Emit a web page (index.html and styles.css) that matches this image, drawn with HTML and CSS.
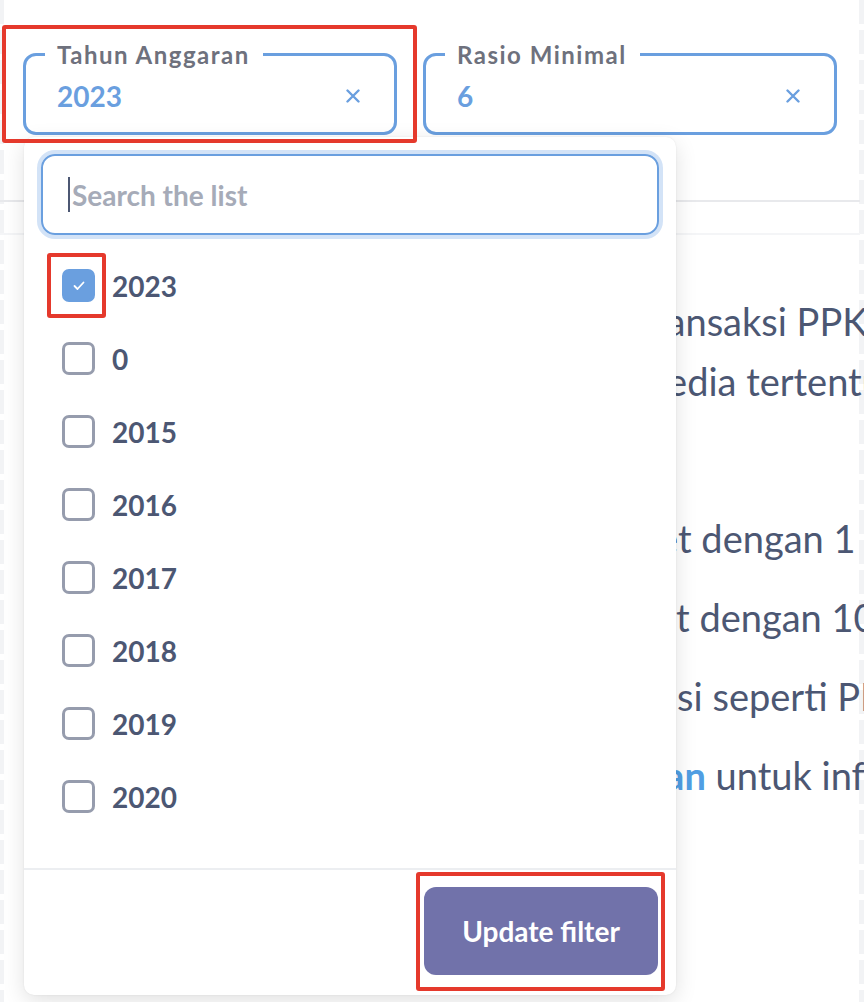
FILE: index.html
```html
<!DOCTYPE html>
<html lang="id">
<head>
    <meta charset="UTF-8">
    <meta name="viewport" content="width=device-width, initial-scale=1.0">
    <title>Filter Dashboard PPK</title>
    <link rel="stylesheet" href="styles.css">
</head>
<body>
    <div class="page">
        <div class="filters">
            <fieldset class="filter filter-year">
                <legend>Tahun Anggaran</legend>
                <div class="filter-value">
                    <span>2023</span>
                    <svg class="clear" width="14" height="14" viewBox="0 0 14 14"><path d="M1.5 1.5 L12.5 12.5 M12.5 1.5 L1.5 12.5"/></svg>
                </div>
            </fieldset>
            <fieldset class="filter filter-ratio">
                <legend>Rasio Minimal</legend>
                <div class="filter-value">
                    <span>6</span>
                    <svg class="clear" width="14" height="14" viewBox="0 0 14 14"><path d="M1.5 1.5 L12.5 12.5 M12.5 1.5 L1.5 12.5"/></svg>
                </div>
            </fieldset>
        </div>

        <div class="tabs"></div>

        <div class="section">
            <p class="intro">Dashboard ini memperlihatkan nilai transaksi PPK dengan penyedia<br>yang bertransaksi hanya dengan penyedia tertentu saja.</p>
            <ul class="notes">
                <li>Merah: PPK yang hanya punya paket dengan 1 penyedia</li>
                <li>Hijau: PPK yang punya banyak paket dengan 10 penyedia</li>
                <li>Arahkan pointer untuk lihat informasi seperti PPK dan satker</li>
                <li>Silakan kunjungi halaman <a href="#">Keterangan</a> untuk informasi lebih lanjut</li>
            </ul>
        </div>

        <div class="popover">
            <div class="search">
                <span class="caret"></span>
                <span class="placeholder">Search the list</span>
            </div>
            <ul class="options">
                <li class="option"><span class="box checked"><svg width="12" height="10" viewBox="0 0 12 10"><path d="M1.5 5 L4.5 8 L10.5 1.5"/></svg></span>2023</li>
                <li class="option"><span class="box"></span>0</li>
                <li class="option"><span class="box"></span>2015</li>
                <li class="option"><span class="box"></span>2016</li>
                <li class="option"><span class="box"></span>2017</li>
                <li class="option"><span class="box"></span>2018</li>
                <li class="option"><span class="box"></span>2019</li>
                <li class="option"><span class="box"></span>2020</li>
            </ul>
            <div class="popover-footer">
                <button class="update">Update filter</button>
            </div>
        </div>

        <div class="mark mark-field"></div>
        <div class="mark mark-check"></div>
        <div class="mark mark-button"></div>
    </div>
</body>
</html>
```

FILE: styles.css
```css
:root {
    --blue: #6a9fdf;
    --ring: #d3e3f7;
    --text-dark: #4c5773;
    --text-label: #6e717d;
    --muted: #a6abb8;
    --purple: #7172aa;
    --mark: #e5392c;
    --font-family: 'Lato', sans-serif;
}

html, body {
    overflow: hidden;
}

body {
    margin: 0;
    font-family: var(--font-family);
    color: var(--text-dark);
    background:
        repeating-linear-gradient(to bottom, #f2f3f5 0 24px, #fff 24px 30px) left top / 4px 100% no-repeat,
        repeating-linear-gradient(to bottom, #f2f3f5 0 24px, #fff 24px 30px) right top / 5px 100% no-repeat,
        #fff;
    height: 1002px;
}

.page {
    position: relative;
    width: 860px;
    height: 1002px;
}

/* filter widgets */
.filters {
    display: flex;
    gap: 26px;
    padding: 42px 0 0 23px;
}

.filter {
    margin: 0;
    padding: 0 34px 8px 31px;
    border: 3px solid var(--blue);
    border-radius: 13px;
    min-width: 0;
}

.filter-year {
    width: 374px;
    box-sizing: border-box;
}

.filter-ratio {
    width: 414px;
    box-sizing: border-box;
}

.filter legend {
    margin-left: -12px;
    padding: 0 13px 0 12px;
    font-size: 24px;
    line-height: 25px;
    font-weight: 700;
    letter-spacing: 1.5px;
    color: var(--text-label);
}

.filter-value {
    display: flex;
    align-items: center;
    justify-content: space-between;
    height: 57px;
    font-size: 28px;
    font-weight: 700;
    color: var(--blue);
}

.clear path {
    fill: none;
    stroke: var(--blue);
    stroke-width: 2.4;
    stroke-linecap: round;
}

/* page behind the popover */
.tabs {
    height: 65px;
    border-bottom: 2px solid #e8e9ec;
}

.section {
    margin-top: 31px;
    border-top: 2px solid #f4f5f7;
    padding-left: 44px;
    white-space: nowrap;
    font-size: 38px;
}

.intro {
    margin: 56px 0 0;
    line-height: 60px;
}

.notes {
    margin: 97px 0 0;
    padding-left: 40px;
}

.notes li {
    line-height: 60px;
    margin-bottom: 19px;
}

.notes a {
    color: #509ee3;
    font-weight: 700;
    text-decoration: none;
}

/* dropdown */
.popover {
    position: absolute;
    left: 24px;
    top: 137px;
    width: 652px;
    height: 858px;
    box-sizing: border-box;
    display: flex;
    flex-direction: column;
    padding-top: 17px;
    background: #fff;
    border-radius: 10px;
    box-shadow: 0 6px 22px rgba(0, 0, 0, 0.12), 0 0 2px rgba(0, 0, 0, 0.08);
    z-index: 2;
}

.search {
    margin: 0 17px;
    height: 81px;
    box-sizing: border-box;
    display: flex;
    align-items: center;
    padding-left: 25px;
    border: 2px solid var(--blue);
    border-radius: 14px;
    box-shadow: 0 0 0 4px var(--ring);
    font-size: 28px;
    font-weight: 700;
}

.caret {
    width: 2px;
    height: 35px;
    background: var(--text-dark);
    margin-right: 2px;
}

.placeholder {
    color: var(--muted);
}

.options {
    list-style: none;
    margin: 14px 0 0;
    padding: 0 0 0 38px;
    flex: 1;
}

.option {
    display: flex;
    align-items: center;
    gap: 17px;
    height: 73px;
    font-size: 28px;
    font-weight: 700;
    color: var(--text-dark);
}

.box {
    width: 33px;
    height: 33px;
    box-sizing: border-box;
    border: 3.5px solid #969cad;
    border-radius: 7px;
    display: flex;
    align-items: center;
    justify-content: center;
}

.box.checked {
    border-color: var(--blue);
    background: var(--blue);
}

.box path {
    fill: none;
    stroke: #fff;
    stroke-width: 1.8;
    stroke-linecap: round;
    stroke-linejoin: round;
}

.popover-footer {
    display: flex;
    justify-content: flex-end;
    padding: 17px 18px 20px;
    border-top: 2px solid #eceef1;
}

.update {
    width: 234px;
    height: 88px;
    border: none;
    border-radius: 12px;
    background: var(--purple);
    color: #fff;
    font-family: var(--font-family);
    font-size: 28px;
    font-weight: 700;
}

/* red annotation boxes */
.mark {
    position: absolute;
    border: 4px solid var(--mark);
    border-radius: 3px;
    box-sizing: border-box;
    z-index: 3;
}

.mark-field {
    left: 2px;
    top: 25px;
    width: 415px;
    height: 118px;
}

.mark-check {
    left: 47px;
    top: 253px;
    width: 59px;
    height: 65px;
}

.mark-button {
    left: 416px;
    top: 872px;
    width: 249px;
    height: 119px;
}
```
